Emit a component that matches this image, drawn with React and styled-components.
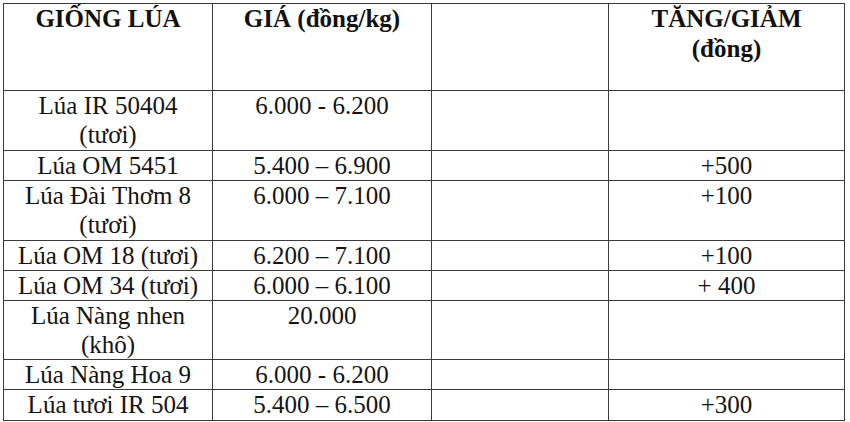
import React from 'react';
import styled, { createGlobalStyle } from 'styled-components';

const GlobalStyle = createGlobalStyle`
  html, body {
    margin: 0;
    padding: 0;
    background: #fff;
  }
`;

const Page = styled.div`
  padding: 3px 0 0 3px;
  font-family: "Liberation Serif", "Times New Roman", serif;
  color: #141414;
`;

const Table = styled.table`
  border-collapse: collapse;
  table-layout: fixed;
  width: 842px;
  border: 1px solid #555;
`;

const Col = styled.col`
  width: ${({ w }) => w}px;
`;

const Row = styled.tr`
  height: ${({ h }) => h}px;
`;

const HeadCell = styled.th`
  border: 1px solid #3a3a3a;
  padding: 0 4px;
  vertical-align: top;
  text-align: center;
  font-size: 25px;
  line-height: 30px;
  font-weight: bold;
  color: #111;
`;

const Cell = styled.td`
  border: 1px solid #3a3a3a;
  padding: 0 4px;
  vertical-align: top;
  text-align: center;
  font-size: 25px;
  line-height: 29px;
  font-weight: normal;
`;

const rows = [
  { name: 'Lúa IR 50404 (tươi)', price: '6.000 - 6.200', change: '', h: 60 },
  { name: 'Lúa OM 5451', price: '5.400 – 6.900', change: '+500', h: 30 },
  { name: 'Lúa Đài Thơm 8 (tươi)', price: '6.000 – 7.100', change: '+100', h: 60 },
  { name: 'Lúa OM 18 (tươi)', price: '6.200 – 7.100', change: '+100', h: 30 },
  { name: 'Lúa OM 34 (tươi)', price: '6.000 – 6.100', change: '+ 400', h: 30 },
  { name: 'Lúa Nàng nhen (khô)', price: '20.000', change: '', h: 59 },
  { name: 'Lúa Nàng Hoa 9', price: '6.000 - 6.200', change: '', h: 30 },
  { name: 'Lúa tươi IR 504', price: '5.400 – 6.500', change: '+300', h: 31 },
];

export default function App() {
  return (
    <Page>
      <GlobalStyle />
      <Table>
        <colgroup>
          <Col w={209} />
          <Col w={219} />
          <Col w={177} />
          <Col w={236} />
        </colgroup>
        <thead>
          <Row h={87}>
            <HeadCell>GIỐNG LÚA</HeadCell>
            <HeadCell>GIÁ (đồng/kg)</HeadCell>
            <HeadCell />
            <HeadCell>
              TĂNG/GIẢM
              <br />
              (đồng)
            </HeadCell>
          </Row>
        </thead>
        <tbody>
          {rows.map((r) => (
            <Row key={r.name} h={r.h}>
              <Cell>{r.name}</Cell>
              <Cell>{r.price}</Cell>
              <Cell />
              <Cell>{r.change}</Cell>
            </Row>
          ))}
        </tbody>
      </Table>
    </Page>
  );
}
